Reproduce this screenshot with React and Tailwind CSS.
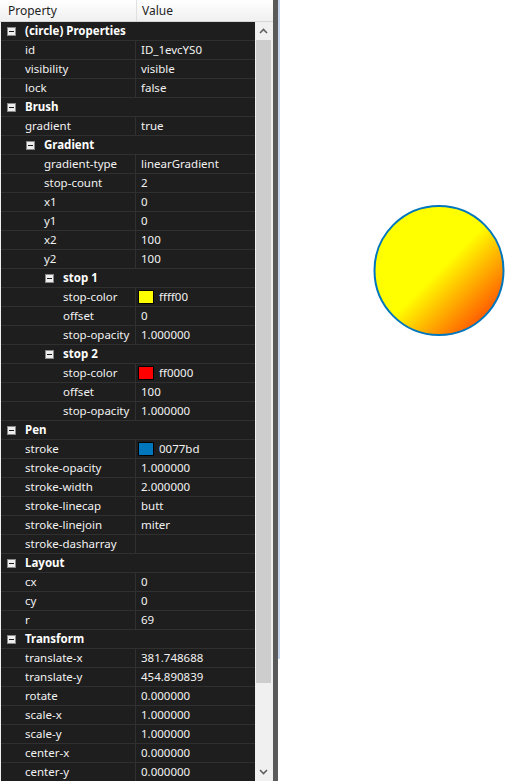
import React from "react";

const rows = [
  { t: "cat", l: 0, name: "(circle) Properties" },
  { t: "prop", l: 0, name: "id", value: "ID_1evcYS0" },
  { t: "prop", l: 0, name: "visibility", value: "visible" },
  { t: "prop", l: 0, name: "lock", value: "false" },
  { t: "cat", l: 0, name: "Brush" },
  { t: "prop", l: 0, name: "gradient", value: "true" },
  { t: "cat", l: 1, name: "Gradient" },
  { t: "prop", l: 1, name: "gradient-type", value: "linearGradient" },
  { t: "prop", l: 1, name: "stop-count", value: "2" },
  { t: "prop", l: 1, name: "x1", value: "0" },
  { t: "prop", l: 1, name: "y1", value: "0" },
  { t: "prop", l: 1, name: "x2", value: "100" },
  { t: "prop", l: 1, name: "y2", value: "100" },
  { t: "cat", l: 2, name: "stop 1" },
  { t: "prop", l: 2, name: "stop-color", value: "ffff00", color: "#ffff00" },
  { t: "prop", l: 2, name: "offset", value: "0" },
  { t: "prop", l: 2, name: "stop-opacity", value: "1.000000" },
  { t: "cat", l: 2, name: "stop 2" },
  { t: "prop", l: 2, name: "stop-color", value: "ff0000", color: "#ff0000" },
  { t: "prop", l: 2, name: "offset", value: "100" },
  { t: "prop", l: 2, name: "stop-opacity", value: "1.000000" },
  { t: "cat", l: 0, name: "Pen" },
  { t: "prop", l: 0, name: "stroke", value: "0077bd", color: "#0077bd" },
  { t: "prop", l: 0, name: "stroke-opacity", value: "1.000000" },
  { t: "prop", l: 0, name: "stroke-width", value: "2.000000" },
  { t: "prop", l: 0, name: "stroke-linecap", value: "butt" },
  { t: "prop", l: 0, name: "stroke-linejoin", value: "miter" },
  { t: "prop", l: 0, name: "stroke-dasharray", value: "" },
  { t: "cat", l: 0, name: "Layout" },
  { t: "prop", l: 0, name: "cx", value: "0" },
  { t: "prop", l: 0, name: "cy", value: "0" },
  { t: "prop", l: 0, name: "r", value: "69" },
  { t: "cat", l: 0, name: "Transform" },
  { t: "prop", l: 0, name: "translate-x", value: "381.748688" },
  { t: "prop", l: 0, name: "translate-y", value: "454.890839" },
  { t: "prop", l: 0, name: "rotate", value: "0.000000" },
  { t: "prop", l: 0, name: "scale-x", value: "1.000000" },
  { t: "prop", l: 0, name: "scale-y", value: "1.000000" },
  { t: "prop", l: 0, name: "center-x", value: "0.000000" },
  { t: "prop", l: 0, name: "center-y", value: "0.000000" },
];

const catPad = ["pl-[6px]", "pl-[25px]", "pl-[44px]"];
const propPad = ["pl-[24px]", "pl-[43px]", "pl-[62px]"];

function Expander() {
  return (
    <div className="w-[9px] h-[9px] border border-[#8a8a8a] bg-[#eeeeee] flex items-center justify-center shrink-0">
      <div className="w-[5px] h-[1px] bg-[#1a1a1a]" />
    </div>
  );
}

function Row({ r }) {
  if (r.t === "cat") {
    return (
      <div className={`h-[19px] border-b border-[#303030] flex items-center ${catPad[r.l]}`}>
        <Expander />
        <span className="ml-[9px] pb-[1px] font-bold text-[#ffffff] leading-none whitespace-nowrap">{r.name}</span>
      </div>
    );
  }
  return (
    <div className="h-[19px] border-b border-[#303030] flex">
      <div className={`w-[135px] shrink-0 border-r border-[#303030] flex items-center ${propPad[r.l]} whitespace-nowrap overflow-hidden`}>
        <span className="leading-none pb-[1px]">{r.name}</span>
      </div>
      <div className="flex-1 flex items-center pl-[5px] whitespace-nowrap">
        {r.color ? (
          <>
            <div
              className="w-[16px] h-[14px] border border-black shrink-0 -ml-[3px]"
              style={{ background: r.color }}
            />
            <span className="ml-[5px] pb-[1px] leading-none">{r.value}</span>
          </>
        ) : (
          <span className="leading-none pb-[1px]">{r.value}</span>
        )}
      </div>
    </div>
  );
}

export default function App() {
  return (
    <div
      className="w-[519px] h-[781px] overflow-hidden flex bg-white text-[11.5px] text-[#f2f2f2]"
      style={{ fontFamily: '"Noto Sans", "Open Sans", sans-serif' }}
    >
      <div className="w-[273px] shrink-0 flex flex-col bg-[#f0f0f0]">
        <div className="h-[22px] shrink-0 flex bg-gradient-to-b from-[#ffffff] to-[#f0f0f0] border-b border-[#d5d5d5] text-[#1e1e1e] text-[12px]">
          <div className="w-[137px] border-r border-[#e0e0e0] flex items-center pl-[8px]">Property</div>
          <div className="flex-1 flex items-center pl-[5px]">Value</div>
        </div>
        <div className="flex-1 flex min-h-0 pl-[1px]">
          <div className="w-[254px] shrink-0 bg-[#1e1e1e] overflow-hidden">
            {rows.map((r, i) => (
              <Row key={i} r={r} />
            ))}
          </div>
          <div className="w-[17px] shrink-0 flex flex-col bg-[#f0f0f0]">
            <div className="h-[18px] flex items-center justify-center">
              <svg width="9" height="6" viewBox="0 0 9 6">
                <path d="M1 5 L4.5 1.5 L8 5" fill="none" stroke="#606060" strokeWidth="1.6" />
              </svg>
            </div>
            <div className="h-[643px] mx-[1px] bg-[#cdcdcd]" />
            <div className="flex-1" />
            <div className="h-[18px] flex items-center justify-center">
              <svg width="9" height="6" viewBox="0 0 9 6">
                <path d="M1 1 L4.5 4.5 L8 1" fill="none" stroke="#606060" strokeWidth="1.6" />
              </svg>
            </div>
          </div>
        </div>
      </div>
      <div className="w-[5px] shrink-0 bg-[#5a5a5a]" />
      <div className="w-[2px] shrink-0 flex flex-col">
        <div className="h-[659px] bg-[#c6d5ee]" />
      </div>
      <div className="flex-1 relative bg-white">
        <svg className="absolute left-0 top-0" width="239" height="781" viewBox="0 0 239 781">
          <defs>
            <linearGradient id="g" gradientUnits="userSpaceOnUse" x1="159" y1="270.5" x2="231" y2="342.5">
              <stop offset="0" stopColor="#ffff00" />
              <stop offset="1" stopColor="#ff0000" />
            </linearGradient>
          </defs>
          <circle cx="159" cy="270.5" r="64.5" fill="url(#g)" stroke="#0077bd" strokeWidth="2" />
        </svg>
      </div>
    </div>
  );
}
